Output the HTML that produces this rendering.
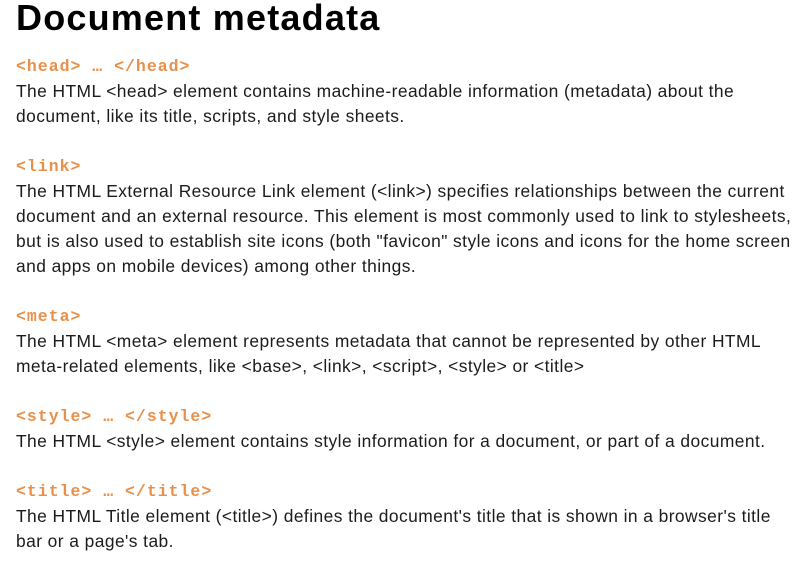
<!DOCTYPE html>
<html><head><meta charset="utf-8"><style>
html,body{margin:0;padding:0;background:#fff;width:805px;height:566px;overflow:hidden}
body{font-family:"Liberation Sans",sans-serif;color:#1b1b1b}
h1{position:absolute;left:16px;top:-2px;margin:0;font-size:36px;font-weight:bold;letter-spacing:1.2px;color:#000;line-height:40px;white-space:nowrap}
.c{position:absolute;left:16px;font-family:"Liberation Mono",monospace;font-weight:bold;font-size:16.5px;letter-spacing:1px;color:#e8904a;line-height:25px;white-space:nowrap}
.t{position:absolute;left:16px;font-size:17.4px;letter-spacing:0.43px;line-height:25px;white-space:nowrap}
</style></head><body>
<h1>Document metadata</h1>
<div class="c" style="top:54px">&lt;head&gt; … &lt;/head&gt;</div>
<div class="t" style="top:79px">The HTML &lt;head&gt; element contains machine-readable information (metadata) about the<br>document, like its title, scripts, and style sheets.</div>
<div class="c" style="top:154px">&lt;link&gt;</div>
<div class="t" style="top:179px">The HTML External Resource Link element (&lt;link&gt;) specifies relationships between the current<br>document and an external resource. This element is most commonly used to link to stylesheets,<br>but is also used to establish site icons (both "favicon" style icons and icons for the home screen<br>and apps on mobile devices) among other things.</div>
<div class="c" style="top:304px">&lt;meta&gt;</div>
<div class="t" style="top:329px">The HTML &lt;meta&gt; element represents metadata that cannot be represented by other HTML<br>meta-related elements, like &lt;base&gt;, &lt;link&gt;, &lt;script&gt;, &lt;style&gt; or &lt;title&gt;</div>
<div class="c" style="top:404px">&lt;style&gt; … &lt;/style&gt;</div>
<div class="t" style="top:429px">The HTML &lt;style&gt; element contains style information for a document, or part of a document.</div>
<div class="c" style="top:479px">&lt;title&gt; … &lt;/title&gt;</div>
<div class="t" style="top:504px">The HTML Title element (&lt;title&gt;) defines the document's title that is shown in a browser's title<br>bar or a page's tab.</div>
</body></html>
